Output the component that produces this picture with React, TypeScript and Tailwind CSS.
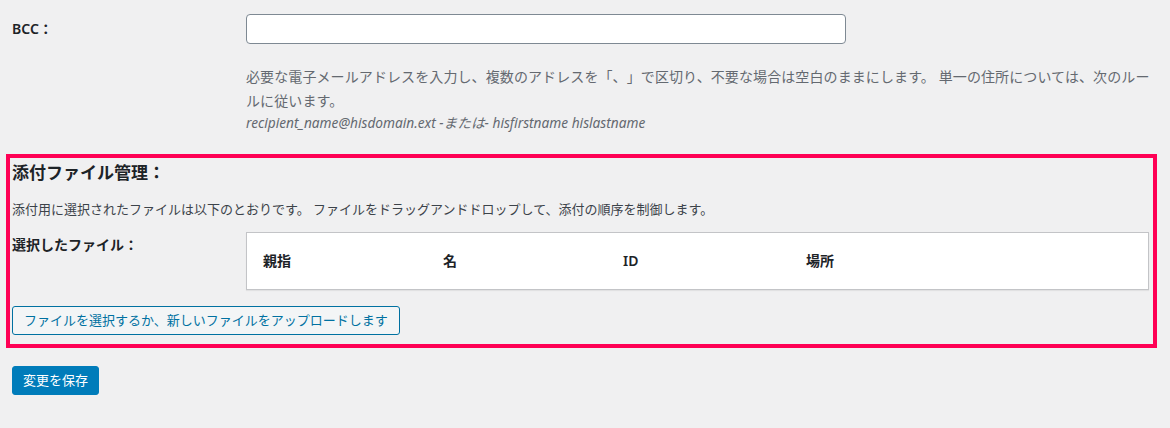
import React from 'react';

const font = { fontFamily: '"Noto Sans", "Noto Sans CJK JP", sans-serif' };

const headers = [
  { label: '親指', w: 'w-[180px]' },
  { label: '名', w: 'w-[180px]' },
  { label: 'ID', w: 'w-[183px]' },
  { label: '場所', w: 'w-[183px]' },
];

const App: React.FC = () => {
  return (
    <div className="w-[1170px] h-[428px] bg-[#f0f0f1] overflow-hidden text-[#1d2327]" style={font}>
      {/* BCC */}
      <div className="flex pt-[14px] pl-[12px]">
        <div className="w-[234px] pt-[6px] text-[14px] leading-[18px] font-semibold">BCC：</div>
        <div className="flex flex-col">
          <input
            type="text"
            className="w-[600px] h-[30px] bg-white border border-[#7e8993] rounded-[4px] outline-none px-2"
          />
          <p className="mt-[21px] w-[906px] text-[14px] leading-[24px] tracking-[0.1px] text-[#646970] [text-spacing-trim:space-all]">
            必要な電子メールアドレスを入力し、複数のアドレスを「、」で区切り、不要な場合は空白のままにします。 単一の住所については、次のルールに従います。
          </p>
          <p className="text-[13.7px] leading-[20px] text-[#646970] italic">
            recipient_name@hisdomain.ext -または- hisfirstname hislastname
          </p>
        </div>
      </div>

      {/* 添付ファイル管理 */}
      <div className="mt-[21px] ml-[6px] w-[1151px] h-[194px] border-[4px] border-[#ff0055] pl-[2px] pt-[4px] flex flex-col items-start">
        <h2 className="text-[17px] leading-[22px] font-bold">添付ファイル管理：</h2>
        <p className="mt-[15px] text-[13px] leading-[20px] text-[#3c434a]">
          添付用に選択されたファイルは以下のとおりです。 ファイルをドラッグアンドドロップして、添付の順序を制御します。
        </p>
        <div className="mt-[13px] flex">
          <div className="w-[234px] pt-[3px] text-[14px] leading-[20px] font-semibold">選択したファイル：</div>
          <div className="w-[903px] h-[58px] bg-white border border-[#c3c4c7] shadow-[0_1px_1px_rgba(0,0,0,0.06)] flex items-center pl-[16px]">
            {headers.map(h => (
              <div key={h.label} className={`${h.w} text-[14px] leading-[20px] font-semibold`}>{h.label}</div>
            ))}
          </div>
        </div>
        <button className="mt-[16px] h-[29px] px-[11px] bg-[#f3f5f6] border border-[#0071a1] rounded-[3px] text-[#0071a1] text-[13px] leading-[27px]">
          ファイルを選択するか、新しいファイルをアップロードします
        </button>
      </div>

      <div className="mt-[18px] pl-[12px]">
        <button className="h-[29px] px-[10px] bg-[#007cba] border border-[#007cba] rounded-[3px] text-white text-[13px] leading-[27px]">
          変更を保存
        </button>
      </div>
    </div>
  );
};

export default App;
